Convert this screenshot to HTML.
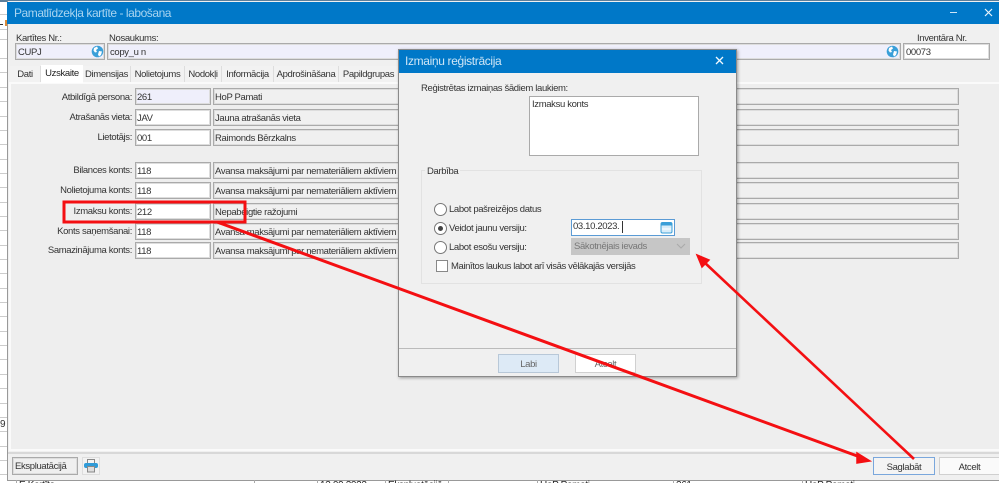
<!DOCTYPE html>
<html><head><meta charset="utf-8">
<style>
html,body{margin:0;padding:0}
body{width:999px;height:483px;overflow:hidden;position:relative;background:#fff;font-family:"Liberation Sans",sans-serif;font-size:9.5px;letter-spacing:-.35px;color:#333}
div{position:absolute;box-sizing:border-box;white-space:nowrap}
.f{height:17px;background:#fff;border:1px solid #aaa;box-shadow:inset 0 0 0 1px #ddd;padding:0 0 0 1px;line-height:18px;color:#333;overflow:hidden}
.d{background:#f0f0f0;left:213px;width:746px}
.l{text-align:right;width:126px;left:6px;line-height:14px}
.t{top:66px;height:16px;background:#f2f2f2;border-right:1px solid #ddd;line-height:18px;text-align:center}
.g{height:1px;background:#ccc;left:0;width:7px}
.b{height:19px;line-height:19px;text-align:center;background:#fff;border:1px solid #d0d0d0}
.r{width:13px;height:13px;border:1px solid #777;border-radius:50%;background:#fff}
.c{top:480px;height:3px;overflow:hidden;line-height:12px;color:#222;font-size:10px}
.v{top:480px;width:1px;height:3px;background:#aaa}
</style></head><body>

<!-- background spreadsheet -->
<div style="left:0;top:0;width:999px;height:2px;background:#5c7f9c"></div>
<div class="g" style="top:14px"></div><div class="g" style="top:29px"></div><div class="g" style="top:39px"></div><div class="g" style="top:58px"></div>
<div class="g" style="top:72px"></div><div class="g" style="top:87px"></div><div class="g" style="top:101px"></div><div class="g" style="top:116px"></div><div class="g" style="top:130px"></div><div class="g" style="top:144px"></div><div class="g" style="top:159px"></div><div class="g" style="top:173px"></div><div class="g" style="top:187px"></div><div class="g" style="top:202px"></div><div class="g" style="top:216px"></div><div class="g" style="top:230px"></div><div class="g" style="top:245px"></div><div class="g" style="top:259px"></div><div class="g" style="top:273px"></div><div class="g" style="top:288px"></div><div class="g" style="top:302px"></div><div class="g" style="top:316px"></div><div class="g" style="top:331px"></div><div class="g" style="top:345px"></div><div class="g" style="top:359px"></div><div class="g" style="top:374px"></div><div class="g" style="top:388px"></div><div class="g" style="top:403px"></div><div class="g" style="top:417px"></div><div class="g" style="top:431px"></div><div class="g" style="top:446px"></div><div class="g" style="top:460px"></div><div class="g" style="top:474px"></div>
<div style="left:0;top:419px;font-size:10px;color:#333;line-height:12px">9</div>
<div style="left:5px;top:20px;width:2px;height:6px;background:#d98b3a"></div>
<div style="left:0;top:24px;width:3px;height:1px;background:#333"></div>

<!-- main window -->
<div style="left:7px;top:1px;width:992px;height:480px;background:#f0f0f0;border-left:1px solid #999;border-bottom:1px solid #999"></div>
<div style="left:7px;top:2px;width:992px;height:22px;background:#0078c8;color:#a8d4f0;font-size:12px;letter-spacing:-.45px;line-height:23px;padding-left:7px">Pamatlīdzekļa kartīte - labošana</div>
<div style="left:950px;top:12px;width:7px;height:1px;background:#cfe6f6"></div>
<svg style="position:absolute;left:984px;top:8px" width="9" height="9"><path d="M1 1L8 8M8 1L1 8" stroke="#eaf5fc" stroke-width="1.2" fill="none"/></svg>

<div style="left:16px;top:32px;line-height:14px">Kartītes Nr.:</div>
<div style="left:109px;top:32px;line-height:14px">Nosaukums:</div>
<div style="left:917px;top:32px;line-height:14px">Inventāra Nr.</div>
<div class="f" style="left:15px;top:43px;width:90px;background:#efeffb;padding-left:2px">CUPJ</div>
<div class="f" style="left:107px;top:43px;width:794px;background:#efeffb;padding-left:2px">copy_u n</div>
<div class="f" style="left:903px;top:43px;width:87px;padding-left:2px">00073</div>
<svg style="position:absolute;left:91px;top:45px" width="13" height="13" viewBox="0 0 13 13"><circle cx="6.5" cy="6.5" r="5.8" fill="#3a9fd8"/><path d="M3 3l3-1.5 1 2-2 1.5 1 2-2 .5-1.5-2zM8 6l3 .5-1 3.5-2 1.5-1-2z" fill="#fff"/></svg>
<svg style="position:absolute;left:886px;top:45px" width="13" height="13" viewBox="0 0 13 13"><circle cx="6.5" cy="6.5" r="5.8" fill="#3a9fd8"/><path d="M3 3l3-1.5 1 2-2 1.5 1 2-2 .5-1.5-2zM8 6l3 .5-1 3.5-2 1.5-1-2z" fill="#fff"/></svg>

<!-- tabs -->
<div class="t" style="left:10px;width:31px">Dati</div>
<div class="t" style="left:83px;width:48px">Dimensijas</div>
<div class="t" style="left:131px;width:54px">Nolietojums</div>
<div class="t" style="left:185px;width:37px">Nodokļi</div>
<div class="t" style="left:222px;width:52px">Informācija</div>
<div class="t" style="left:274px;width:65px">Apdrošināšana</div>
<div class="t" style="left:339px;width:60px">Papildgrupas</div>

<!-- tab panel -->
<div style="left:9px;top:82px;width:990px;height:369px;background:#eeeeee;border:2px solid #fafafa;border-right:0"></div>
<div class="t" style="left:41px;width:42px;top:65px;height:18px;background:#fff;color:#222;border:0;line-height:17px">Uzskaite</div>
<div style="left:8px;top:452px;width:991px;height:2px;background:#d8d8d8"></div>

<!-- rows -->
<div class="l" style="top:91px">Atbildīgā persona:</div>
<div class="f" style="left:135px;top:88px;width:76px;background:#efeffb">261</div>
<div class="f d" style="top:88px">HoP Pamati</div>
<div class="l" style="top:111px">Atrašanās vieta:</div>
<div class="f" style="left:135px;top:109px;width:76px">JAV</div>
<div class="f d" style="top:109px">Jauna atrašanās vieta</div>
<div class="l" style="top:131px">Lietotājs:</div>
<div class="f" style="left:135px;top:129px;width:76px">001</div>
<div class="f d" style="top:129px">Raimonds Bērzkalns</div>

<div class="l" style="top:164px">Bilances konts:</div>
<div class="f" style="left:135px;top:162px;width:76px">118</div>
<div class="f d" style="top:162px">Avansa maksājumi par nemateriāliem aktīviem</div>
<div class="l" style="top:184px">Nolietojuma konts:</div>
<div class="f" style="left:135px;top:182px;width:76px">118</div>
<div class="f d" style="top:182px">Avansa maksājumi par nemateriāliem aktīviem</div>
<div class="l" style="top:205px">Izmaksu konts:</div>
<div class="f" style="left:135px;top:203px;width:76px">212</div>
<div class="f d" style="top:203px">Nepabeigtie ražojumi</div>
<div class="l" style="top:225px">Konts saņemšanai:</div>
<div class="f" style="left:135px;top:223px;width:76px">118</div>
<div class="f d" style="top:223px">Avansa maksājumi par nemateriāliem aktīviem</div>
<div class="l" style="top:244px">Samazinājuma konts:</div>
<div class="f" style="left:135px;top:242px;width:76px">118</div>
<div class="f d" style="top:242px">Avansa maksājumi par nemateriāliem aktīviem</div>

<!-- bottom bar -->
<div class="f" style="left:12px;top:457px;width:66px;background:#efefef;padding-left:2px;height:18px;line-height:17px">Ekspluatācijā</div>
<div style="left:82px;top:457px;width:18px;height:18px;background:#f2f2f2;border:1px solid #ddd"></div>
<svg style="position:absolute;left:83px;top:458px" width="16" height="16" viewBox="0 0 16 16"><rect x="4.5" y="1.5" width="7" height="4" fill="#f4f4f4" stroke="#888"/><rect x="1" y="5" width="14" height="5" rx="2" fill="#2f9bd8"/><rect x="4.5" y="8.5" width="7" height="5.5" fill="#ddd" stroke="#888"/></svg>
<div class="b" style="left:873px;top:457px;width:62px;border-color:#7aa7dc;background:#f4f4f4;height:18px;line-height:19px">Saglabāt</div>
<div class="b" style="left:939px;top:457px;width:60px;height:18px;line-height:19px;background:#fafafa;border-right:0">Atcelt</div>

<!-- cut-off table below window -->
<div class="c" style="left:19px">E Kartīte</div>
<div class="v" style="left:16px"></div><div class="v" style="left:254px"></div><div class="v" style="left:317px"></div><div class="v" style="left:385px"></div><div class="v" style="left:448px"></div><div class="v" style="left:537px"></div><div class="v" style="left:673px"></div><div class="v" style="left:802px"></div>
<div class="c" style="left:320px">13.09.2023</div>
<div class="c" style="left:388px">Ekspluatācijā</div>
<div class="c" style="left:540px">HoP Pamati</div>
<div class="c" style="left:676px">261</div>
<div class="c" style="left:805px">HoP Pamati</div>

<!-- dialog -->
<div style="left:398px;top:49px;width:339px;height:328px;background:#f0f0f0;border:1px solid #8a8a8a;box-shadow:1px 1px 3px rgba(0,0,0,.35)"></div>
<div style="left:399px;top:50px;width:337px;height:23px;background:#0078c8;color:#cfe6f6;font-size:12px;line-height:23px;padding-left:6px">Izmaiņu reģistrācija</div>
<svg style="position:absolute;left:715px;top:56px" width="9" height="9"><path d="M1 1L8 8M8 1L1 8" stroke="#f2f9fe" stroke-width="1.3" fill="none"/></svg>
<div style="left:421px;top:82px;line-height:14px">Reģistrētas izmaiņas šādiem laukiem:</div>
<div style="left:529px;top:96px;width:170px;height:60px;background:#fff;border:1px solid #aaa;padding:1px 2px;line-height:13px">Izmaksu konts</div>

<div style="left:421px;top:170px;width:281px;height:114px;border:1px solid #e2e2e2"></div>
<div style="left:425px;top:165px;background:#f0f0f0;padding:0 2px;line-height:14px">Darbība</div>

<div class="r" style="left:434px;top:203px"></div>
<div style="left:449px;top:203px;line-height:14px">Labot pašreizējos datus</div>
<div class="r" style="left:434px;top:222px"></div>
<div style="left:438px;top:226px;width:5px;height:5px;border-radius:50%;background:#444"></div>
<div style="left:449px;top:222px;line-height:14px">Veidot jaunu versiju:</div>
<div style="left:571px;top:219px;width:104px;height:17px;background:#fff;border:1px solid #5b9bd5;padding-left:1px;line-height:14px">03.10.2023.</div>
<div style="left:622px;top:221px;width:1px;height:12px;background:#333"></div>
<svg style="position:absolute;left:660px;top:221px" width="13" height="13" viewBox="0 0 13 13"><rect x="1" y="1.5" width="11" height="10.5" rx="1.5" fill="#d8ecf8" stroke="#3a9fd8"/><rect x="1" y="1.5" width="11" height="3" fill="#3a9fd8"/><path d="M2 8h9" stroke="#fff"/></svg>
<div class="r" style="left:434px;top:241px"></div>
<div style="left:449px;top:241px;line-height:14px">Labot esošu versiju:</div>
<div style="left:571px;top:238px;width:119px;height:17px;background:#c6c6c6;color:#777;padding-left:3px;line-height:18px">Sākotnējais ievads</div>
<svg style="position:absolute;left:676px;top:243px" width="10" height="7"><path d="M1 1l4 4 4-4" stroke="#aaa" fill="none"/></svg>
<div style="left:436px;top:260px;width:12px;height:12px;background:#fff;border:1px solid #888"></div>
<div style="left:451px;top:260px;line-height:14px;letter-spacing:-.4px">Mainītos laukus labot arī visās vēlākajās versijās</div>

<div style="left:399px;top:348px;width:337px;height:1px;background:#bbb"></div>
<div class="b" style="left:498px;top:354px;width:61px;background:#ddeaf6;border-color:#b8c8d8;color:#666">Labi</div>
<div class="b" style="left:575px;top:354px;width:61px;color:#666">Atcelt</div>

<!-- red annotations -->
<svg style="position:absolute;left:0;top:0" width="999" height="483">
<rect x="64" y="202" width="181" height="20" fill="none" stroke="#f40f12" stroke-width="3"/>
<path d="M217 222L860 457" stroke="#f40f12" stroke-width="3" fill="none"/>
<path d="M870 461L857 453L857 463Z" fill="#f40f12" stroke="#f40f12" stroke-width="1.5"/>
<path d="M914 459L704 262" stroke="#f40f12" stroke-width="2.6" fill="none"/>
<path d="M697 255L709 260L702 267Z" fill="#f40f12" stroke="#f40f12" stroke-width="1.5"/>
</svg>
</body></html>
